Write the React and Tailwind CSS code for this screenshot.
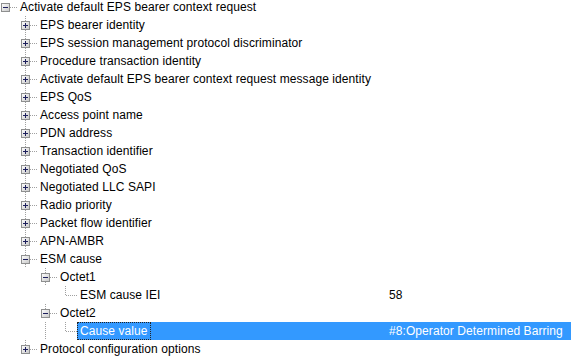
import React from "react";

const rows = [
  { L: 0, t: "Activate default EPS bearer context request", box: "-", last: true, anc: [] },
  { L: 1, t: "EPS bearer identity", box: "+", anc: [false] },
  { L: 1, t: "EPS session management protocol discriminator", box: "+", anc: [false] },
  { L: 1, t: "Procedure transaction identity", box: "+", anc: [false] },
  { L: 1, t: "Activate default EPS bearer context request message identity", box: "+", anc: [false] },
  { L: 1, t: "EPS QoS", box: "+", anc: [false] },
  { L: 1, t: "Access point name", box: "+", anc: [false] },
  { L: 1, t: "PDN address", box: "+", anc: [false] },
  { L: 1, t: "Transaction identifier", box: "+", anc: [false] },
  { L: 1, t: "Negotiated QoS", box: "+", anc: [false] },
  { L: 1, t: "Negotiated LLC SAPI", box: "+", anc: [false] },
  { L: 1, t: "Radio priority", box: "+", anc: [false] },
  { L: 1, t: "Packet flow identifier", box: "+", anc: [false] },
  { L: 1, t: "APN-AMBR", box: "+", anc: [false] },
  { L: 1, t: "ESM cause", box: "-", anc: [false] },
  { L: 2, t: "Octet1", box: "-", anc: [false, true] },
  { L: 3, t: "ESM cause IEI", last: true, anc: [false, true, true], v: "58" },
  { L: 2, t: "Octet2", box: "-", last: true, anc: [false, true] },
  { L: 3, t: "Cause value", last: true, anc: [false, true, false], v: "#8:Operator Determined Barring", sel: true },
  { L: 1, t: "Protocol configuration options", box: "+", last: true, anc: [false] },
];

const LINE = "#a0a0a0";

function Cell({ level, own, cont, last, box }) {
  return (
    <svg width="20" height="18" className="shrink-0 block" shapeRendering="crispEdges">
      {cont && <line x1="5.5" y1="0" x2="5.5" y2="18" stroke={LINE} strokeDasharray="1 1" />}
      {own && (
        <>
          {level > 0 && <line x1="5.5" y1="0" x2="5.5" y2="9" stroke={LINE} strokeDasharray="1 1" />}
          {!last && <line x1="5.5" y1="10" x2="5.5" y2="18" stroke={LINE} strokeDasharray="1 1" />}
          <line x1="6" y1="9.5" x2="17" y2="9.5" stroke={LINE} strokeDasharray="1 1" />
          {box && (
            <>
              <defs>
                <linearGradient id="bg" x1="0" y1="0" x2="1" y2="1">
                  <stop offset="0" stopColor="#ffffff" />
                  <stop offset="1" stopColor="#c6c6c6" />
                </linearGradient>
              </defs>
              <rect x="1.5" y="5.5" width="8" height="8" fill="url(#bg)" stroke="#8e8f8f" />
              <line x1="3" y1="9.5" x2="8" y2="9.5" stroke="#1d1f5c" />
              {box === "+" && <line x1="5.5" y1="7" x2="5.5" y2="12" stroke="#1d1f5c" />}
            </>
          )}
        </>
      )}
    </svg>
  );
}

function Row({ r }) {
  const cells = [];
  for (let k = 0; k < r.L; k++) {
    cells.push(<Cell key={k} level={k} cont={k >= 1 && !r.anc[k]} />);
  }
  cells.push(<Cell key="own" level={r.L} own last={r.last} box={r.box} />);
  const sel = r.sel;
  return (
    <div className="flex h-[18px] w-[571px]">
      <div className="flex w-[389px] shrink-0 h-[18px]">
        <div className="flex -mr-[3px] shrink-0">{cells}</div>
        <span
          className={
            "h-[18px] leading-[16px] px-[2px] border whitespace-nowrap shrink-0 " +
            (sel ? "bg-[#3399ff] text-white border-dotted border-[#222]" : "border-transparent text-black")
          }
        >
          {r.t}
        </span>
        <div className={"flex-1 " + (sel ? "bg-[#3399ff]" : "")} />
      </div>
      <div className={"flex-1 h-[18px] leading-[18px] whitespace-nowrap " + (sel ? "bg-[#3399ff] text-white" : "text-black")}>
        {r.v || ""}
      </div>
    </div>
  );
}

export default function App() {
  return (
    <div
      className="w-[574px] h-[358px] overflow-hidden bg-white text-[12px] tracking-[0.08px]"
      style={{ fontFamily: '"Liberation Sans", Arial, sans-serif' }}
    >
      <div className="mt-[-2px] flex flex-col">
        {rows.map((r, i) => (
          <Row key={i} r={r} />
        ))}
      </div>
    </div>
  );
}
